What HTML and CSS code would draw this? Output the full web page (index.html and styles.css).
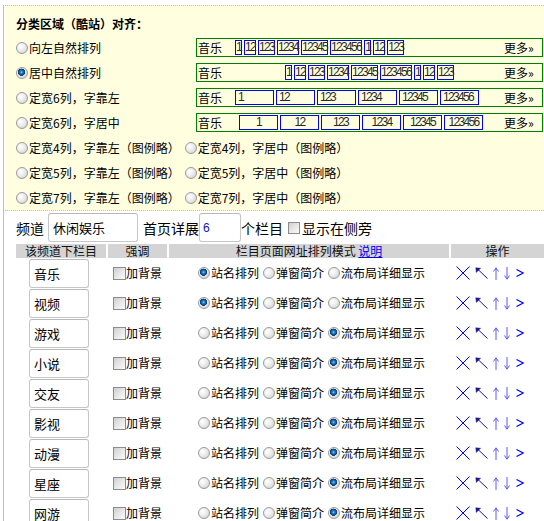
FILE: index.html
```html
<!DOCTYPE html>
<html>
<head>
<meta charset="utf-8">
<link rel="stylesheet" href="styles.css">
</head>
<body>
<div class="page">
  <div class="panel">
    <div class="title">分类区域（酷站）对齐：</div>

    <div class="opt-row">
      <label class="opt"><input class="rd" type="radio" name="align">向左自然排列</label>
      <div class="preview">
        <span class="pv-name">音乐</span>
        <span class="pv-items">
          <span class="tag">1</span><span class="tag">12</span><span class="tag">123</span><span class="tag">1234</span><span class="tag">12345</span><span class="tag">123456</span><span class="tag">1</span><span class="tag">12</span><span class="tag">123</span>
        </span>
        <span class="pv-more">更多»</span>
      </div>
    </div>

    <div class="opt-row">
      <label class="opt"><input class="rd" type="radio" name="align" checked>居中自然排列</label>
      <div class="preview">
        <span class="pv-name">音乐</span>
        <span class="pv-items pv-center">
          <span class="tag">1</span><span class="tag">12</span><span class="tag">123</span><span class="tag">1234</span><span class="tag">12345</span><span class="tag">123456</span><span class="tag">1</span><span class="tag">12</span><span class="tag">123</span>
        </span>
        <span class="pv-more">更多»</span>
      </div>
    </div>

    <div class="opt-row">
      <label class="opt"><input class="rd" type="radio" name="align">定宽6列，字靠左</label>
      <div class="preview">
        <span class="pv-name">音乐</span>
        <span class="pv-items">
          <span class="tag fixed">1</span><span class="tag fixed">12</span><span class="tag fixed">123</span><span class="tag fixed">1234</span><span class="tag fixed">12345</span><span class="tag fixed">123456</span>
        </span>
        <span class="pv-more">更多»</span>
      </div>
    </div>

    <div class="opt-row">
      <label class="opt"><input class="rd" type="radio" name="align">定宽6列，字居中</label>
      <div class="preview">
        <span class="pv-name">音乐</span>
        <span class="pv-items pv-shift">
          <span class="tag fixed mid">1</span><span class="tag fixed mid">12</span><span class="tag fixed mid">123</span><span class="tag fixed mid">1234</span><span class="tag fixed mid">12345</span><span class="tag fixed mid">123456</span>
        </span>
        <span class="pv-more">更多»</span>
      </div>
    </div>

    <div class="opt-row">
      <label class="opt-inline"><input class="rd" type="radio" name="align">定宽4列，字靠左（图例略）</label>
      <label class="opt-inline second"><input class="rd" type="radio" name="align">定宽4列，字居中（图例略）</label>
    </div>
    <div class="opt-row">
      <label class="opt-inline"><input class="rd" type="radio" name="align">定宽5列，字靠左（图例略）</label>
      <label class="opt-inline second"><input class="rd" type="radio" name="align">定宽5列，字居中（图例略）</label>
    </div>
    <div class="opt-row">
      <label class="opt-inline"><input class="rd" type="radio" name="align">定宽7列，字靠左（图例略）</label>
      <label class="opt-inline second"><input class="rd" type="radio" name="align">定宽7列，字居中（图例略）</label>
    </div>
  </div>

  <div class="channel">
    <span class="ch-label">频道</span>
    <input class="field ch-name" type="text" value="休闲娱乐">
    <span class="ch-label">首页详展</span>
    <input class="field ch-num" type="text" value="6">
    <span class="ch-label">个栏目</span>
    <label class="ch-side"><input class="cb" type="checkbox">显示在侧旁</label>
  </div>

  <div class="grid">
    <div class="th">该频道下栏目</div>
    <div class="th">强调</div>
    <div class="th">栏目页面网址排列模式 <a class="link" href="#">说明</a></div>
    <div class="th">操作</div>

    <div class="td c1"><input class="field col-name" type="text" value="音乐"></div>
    <div class="td c2"><label class="chk"><input class="cb" type="checkbox">加背景</label></div>
    <div class="td c3"><label class="ri"><input class="rd" type="radio" name="m1" checked>站名排列</label><label class="ri"><input class="rd" type="radio" name="m1">弹窗简介</label><label class="ri"><input class="rd" type="radio" name="m1">流布局详细显示</label></div>
    <div class="td c4"><svg class="ic ic-x" width="14" height="14" viewBox="0 0 14 14"><path d="M0.5 0.5L13.5 13.5M13.5 0.5L0.5 13.5"/></svg><svg class="ic ic-ul" width="13" height="12" viewBox="0 0 13 12"><path class="st" d="M12.5 11.5L2.5 2"/><path class="hd" d="M0.8 0.8L5.6 1.3L1.3 5.4Z"/></svg><svg class="ic ic-v" width="6" height="13" viewBox="0 0 6 13"><path d="M3 1V13M0.5 4.5L3 0.8L5.5 4.5"/></svg><svg class="ic ic-v" width="6" height="13" viewBox="0 0 6 13"><path d="M3 0V12M0.5 8.5L3 12.2L5.5 8.5"/></svg><svg class="ic ic-gt" width="8" height="8" viewBox="0 0 8 8"><path d="M0.5 0.5L7.2 4L0.5 7.5"/></svg></div>

    <div class="td c1"><input class="field col-name" type="text" value="视频"></div>
    <div class="td c2"><label class="chk"><input class="cb" type="checkbox">加背景</label></div>
    <div class="td c3"><label class="ri"><input class="rd" type="radio" name="m2" checked>站名排列</label><label class="ri"><input class="rd" type="radio" name="m2">弹窗简介</label><label class="ri"><input class="rd" type="radio" name="m2">流布局详细显示</label></div>
    <div class="td c4"><svg class="ic ic-x" width="14" height="14" viewBox="0 0 14 14"><path d="M0.5 0.5L13.5 13.5M13.5 0.5L0.5 13.5"/></svg><svg class="ic ic-ul" width="13" height="12" viewBox="0 0 13 12"><path class="st" d="M12.5 11.5L2.5 2"/><path class="hd" d="M0.8 0.8L5.6 1.3L1.3 5.4Z"/></svg><svg class="ic ic-v" width="6" height="13" viewBox="0 0 6 13"><path d="M3 1V13M0.5 4.5L3 0.8L5.5 4.5"/></svg><svg class="ic ic-v" width="6" height="13" viewBox="0 0 6 13"><path d="M3 0V12M0.5 8.5L3 12.2L5.5 8.5"/></svg><svg class="ic ic-gt" width="8" height="8" viewBox="0 0 8 8"><path d="M0.5 0.5L7.2 4L0.5 7.5"/></svg></div>

    <div class="td c1"><input class="field col-name" type="text" value="游戏"></div>
    <div class="td c2"><label class="chk"><input class="cb" type="checkbox">加背景</label></div>
    <div class="td c3"><label class="ri"><input class="rd" type="radio" name="m3">站名排列</label><label class="ri"><input class="rd" type="radio" name="m3">弹窗简介</label><label class="ri"><input class="rd" type="radio" name="m3" checked>流布局详细显示</label></div>
    <div class="td c4"><svg class="ic ic-x" width="14" height="14" viewBox="0 0 14 14"><path d="M0.5 0.5L13.5 13.5M13.5 0.5L0.5 13.5"/></svg><svg class="ic ic-ul" width="13" height="12" viewBox="0 0 13 12"><path class="st" d="M12.5 11.5L2.5 2"/><path class="hd" d="M0.8 0.8L5.6 1.3L1.3 5.4Z"/></svg><svg class="ic ic-v" width="6" height="13" viewBox="0 0 6 13"><path d="M3 1V13M0.5 4.5L3 0.8L5.5 4.5"/></svg><svg class="ic ic-v" width="6" height="13" viewBox="0 0 6 13"><path d="M3 0V12M0.5 8.5L3 12.2L5.5 8.5"/></svg><svg class="ic ic-gt" width="8" height="8" viewBox="0 0 8 8"><path d="M0.5 0.5L7.2 4L0.5 7.5"/></svg></div>

    <div class="td c1"><input class="field col-name" type="text" value="小说"></div>
    <div class="td c2"><label class="chk"><input class="cb" type="checkbox">加背景</label></div>
    <div class="td c3"><label class="ri"><input class="rd" type="radio" name="m4">站名排列</label><label class="ri"><input class="rd" type="radio" name="m4">弹窗简介</label><label class="ri"><input class="rd" type="radio" name="m4" checked>流布局详细显示</label></div>
    <div class="td c4"><svg class="ic ic-x" width="14" height="14" viewBox="0 0 14 14"><path d="M0.5 0.5L13.5 13.5M13.5 0.5L0.5 13.5"/></svg><svg class="ic ic-ul" width="13" height="12" viewBox="0 0 13 12"><path class="st" d="M12.5 11.5L2.5 2"/><path class="hd" d="M0.8 0.8L5.6 1.3L1.3 5.4Z"/></svg><svg class="ic ic-v" width="6" height="13" viewBox="0 0 6 13"><path d="M3 1V13M0.5 4.5L3 0.8L5.5 4.5"/></svg><svg class="ic ic-v" width="6" height="13" viewBox="0 0 6 13"><path d="M3 0V12M0.5 8.5L3 12.2L5.5 8.5"/></svg><svg class="ic ic-gt" width="8" height="8" viewBox="0 0 8 8"><path d="M0.5 0.5L7.2 4L0.5 7.5"/></svg></div>

    <div class="td c1"><input class="field col-name" type="text" value="交友"></div>
    <div class="td c2"><label class="chk"><input class="cb" type="checkbox">加背景</label></div>
    <div class="td c3"><label class="ri"><input class="rd" type="radio" name="m5">站名排列</label><label class="ri"><input class="rd" type="radio" name="m5">弹窗简介</label><label class="ri"><input class="rd" type="radio" name="m5" checked>流布局详细显示</label></div>
    <div class="td c4"><svg class="ic ic-x" width="14" height="14" viewBox="0 0 14 14"><path d="M0.5 0.5L13.5 13.5M13.5 0.5L0.5 13.5"/></svg><svg class="ic ic-ul" width="13" height="12" viewBox="0 0 13 12"><path class="st" d="M12.5 11.5L2.5 2"/><path class="hd" d="M0.8 0.8L5.6 1.3L1.3 5.4Z"/></svg><svg class="ic ic-v" width="6" height="13" viewBox="0 0 6 13"><path d="M3 1V13M0.5 4.5L3 0.8L5.5 4.5"/></svg><svg class="ic ic-v" width="6" height="13" viewBox="0 0 6 13"><path d="M3 0V12M0.5 8.5L3 12.2L5.5 8.5"/></svg><svg class="ic ic-gt" width="8" height="8" viewBox="0 0 8 8"><path d="M0.5 0.5L7.2 4L0.5 7.5"/></svg></div>

    <div class="td c1"><input class="field col-name" type="text" value="影视"></div>
    <div class="td c2"><label class="chk"><input class="cb" type="checkbox">加背景</label></div>
    <div class="td c3"><label class="ri"><input class="rd" type="radio" name="m6">站名排列</label><label class="ri"><input class="rd" type="radio" name="m6">弹窗简介</label><label class="ri"><input class="rd" type="radio" name="m6" checked>流布局详细显示</label></div>
    <div class="td c4"><svg class="ic ic-x" width="14" height="14" viewBox="0 0 14 14"><path d="M0.5 0.5L13.5 13.5M13.5 0.5L0.5 13.5"/></svg><svg class="ic ic-ul" width="13" height="12" viewBox="0 0 13 12"><path class="st" d="M12.5 11.5L2.5 2"/><path class="hd" d="M0.8 0.8L5.6 1.3L1.3 5.4Z"/></svg><svg class="ic ic-v" width="6" height="13" viewBox="0 0 6 13"><path d="M3 1V13M0.5 4.5L3 0.8L5.5 4.5"/></svg><svg class="ic ic-v" width="6" height="13" viewBox="0 0 6 13"><path d="M3 0V12M0.5 8.5L3 12.2L5.5 8.5"/></svg><svg class="ic ic-gt" width="8" height="8" viewBox="0 0 8 8"><path d="M0.5 0.5L7.2 4L0.5 7.5"/></svg></div>

    <div class="td c1"><input class="field col-name" type="text" value="动漫"></div>
    <div class="td c2"><label class="chk"><input class="cb" type="checkbox">加背景</label></div>
    <div class="td c3"><label class="ri"><input class="rd" type="radio" name="m7">站名排列</label><label class="ri"><input class="rd" type="radio" name="m7">弹窗简介</label><label class="ri"><input class="rd" type="radio" name="m7" checked>流布局详细显示</label></div>
    <div class="td c4"><svg class="ic ic-x" width="14" height="14" viewBox="0 0 14 14"><path d="M0.5 0.5L13.5 13.5M13.5 0.5L0.5 13.5"/></svg><svg class="ic ic-ul" width="13" height="12" viewBox="0 0 13 12"><path class="st" d="M12.5 11.5L2.5 2"/><path class="hd" d="M0.8 0.8L5.6 1.3L1.3 5.4Z"/></svg><svg class="ic ic-v" width="6" height="13" viewBox="0 0 6 13"><path d="M3 1V13M0.5 4.5L3 0.8L5.5 4.5"/></svg><svg class="ic ic-v" width="6" height="13" viewBox="0 0 6 13"><path d="M3 0V12M0.5 8.5L3 12.2L5.5 8.5"/></svg><svg class="ic ic-gt" width="8" height="8" viewBox="0 0 8 8"><path d="M0.5 0.5L7.2 4L0.5 7.5"/></svg></div>

    <div class="td c1"><input class="field col-name" type="text" value="星座"></div>
    <div class="td c2"><label class="chk"><input class="cb" type="checkbox">加背景</label></div>
    <div class="td c3"><label class="ri"><input class="rd" type="radio" name="m8">站名排列</label><label class="ri"><input class="rd" type="radio" name="m8">弹窗简介</label><label class="ri"><input class="rd" type="radio" name="m8" checked>流布局详细显示</label></div>
    <div class="td c4"><svg class="ic ic-x" width="14" height="14" viewBox="0 0 14 14"><path d="M0.5 0.5L13.5 13.5M13.5 0.5L0.5 13.5"/></svg><svg class="ic ic-ul" width="13" height="12" viewBox="0 0 13 12"><path class="st" d="M12.5 11.5L2.5 2"/><path class="hd" d="M0.8 0.8L5.6 1.3L1.3 5.4Z"/></svg><svg class="ic ic-v" width="6" height="13" viewBox="0 0 6 13"><path d="M3 1V13M0.5 4.5L3 0.8L5.5 4.5"/></svg><svg class="ic ic-v" width="6" height="13" viewBox="0 0 6 13"><path d="M3 0V12M0.5 8.5L3 12.2L5.5 8.5"/></svg><svg class="ic ic-gt" width="8" height="8" viewBox="0 0 8 8"><path d="M0.5 0.5L7.2 4L0.5 7.5"/></svg></div>

    <div class="td c1"><input class="field col-name" type="text" value="网游"></div>
    <div class="td c2"><label class="chk"><input class="cb" type="checkbox">加背景</label></div>
    <div class="td c3"><label class="ri"><input class="rd" type="radio" name="m9">站名排列</label><label class="ri"><input class="rd" type="radio" name="m9">弹窗简介</label><label class="ri"><input class="rd" type="radio" name="m9" checked>流布局详细显示</label></div>
    <div class="td c4"><svg class="ic ic-x" width="14" height="14" viewBox="0 0 14 14"><path d="M0.5 0.5L13.5 13.5M13.5 0.5L0.5 13.5"/></svg><svg class="ic ic-ul" width="13" height="12" viewBox="0 0 13 12"><path class="st" d="M12.5 11.5L2.5 2"/><path class="hd" d="M0.8 0.8L5.6 1.3L1.3 5.4Z"/></svg><svg class="ic ic-v" width="6" height="13" viewBox="0 0 6 13"><path d="M3 1V13M0.5 4.5L3 0.8L5.5 4.5"/></svg><svg class="ic ic-v" width="6" height="13" viewBox="0 0 6 13"><path d="M3 0V12M0.5 8.5L3 12.2L5.5 8.5"/></svg><svg class="ic ic-gt" width="8" height="8" viewBox="0 0 8 8"><path d="M0.5 0.5L7.2 4L0.5 7.5"/></svg></div>
  </div>
</div>
</body>
</html>
```
FILE: styles.css
```css
html, body {
  margin: 0;
  padding: 0;
  overflow: hidden;
  background: #fff;
}
body {
  font-family: "Noto Sans CJK SC", "Noto Sans", sans-serif;
  font-size: 12px;
  color: #000;
}
.page {
  margin-left: 3px;
  border-left: 1px solid #99e064;
  padding-left: 1px;
  height: 521px;
  box-sizing: border-box;
}
.panel {
  margin-top: 5px;
  background: #ffffe0;
  border-top: 1px dotted #bdbdbd;
  border-bottom: 1px dotted #bdbdbd;
  padding: 6px 1px 0 11px;
}
.title {
  font-weight: bold;
  font-size: 12px;
  line-height: 23px;
  height: 23px;
}
.opt-row {
  display: flex;
  align-items: center;
  height: 25px;
}
.opt {
  width: 180px;
  flex: none;
  display: flex;
  align-items: center;
  line-height: 14px;
}
.opt-inline {
  display: flex;
  align-items: center;
  line-height: 14px;
}
.opt-inline.second {
  margin-left: 5px;
}
.rd {
  appearance: none;
  -webkit-appearance: none;
  width: 12px;
  height: 12px;
  margin: 0 1px 0 0;
  border-radius: 50%;
  border: 1px solid #9a9a9a;
  box-sizing: border-box;
  flex: none;
  background: radial-gradient(circle at 35% 35%, #ffffff 0, #ececec 45%, #c9c9c9 100%);
}
.rd:checked {
  background:
    radial-gradient(circle at 45% 42%, #8fd0ff 0, #2b86cc 1.2px, #0b4a8a 2.8px, #0b3f78 3.4px, rgba(0,0,0,0) 3.9px),
    radial-gradient(circle at 35% 35%, #ffffff 0, #ececec 45%, #c9c9c9 100%);
}
.cb {
  appearance: none;
  -webkit-appearance: none;
  width: 13px;
  height: 13px;
  margin: 0;
  border: 1px solid #8c8c8c;
  box-sizing: border-box;
  flex: none;
  background: linear-gradient(135deg, #cfcfcf 0, #e9e9e9 55%, #fafafa 100%);
}
.preview {
  flex: 1;
  height: 19px;
  box-sizing: border-box;
  border: 1px solid #008000;
  display: flex;
  align-items: center;
}
.pv-name {
  width: 38px;
  flex: none;
  box-sizing: border-box;
  padding-left: 1px;
  line-height: 14px;
}
.pv-items {
  flex: 1;
  display: flex;
  align-items: center;
  gap: 2px;
}
.pv-center {
  justify-content: center;
}
.pv-shift {
  padding-left: 4px;
}
.pv-more {
  width: 30px;
  margin-right: 8px;
  flex: none;
  line-height: 14px;
  white-space: nowrap;
}
.tag {
  display: block;
  box-sizing: border-box;
  height: 15px;
  border: 1px solid #0000ff;
  font-family: "Liberation Sans", sans-serif;
  font-size: 12px;
  line-height: 13px;
  letter-spacing: -1.67px;
  color: #2a2a2a;
  white-space: nowrap;
}
.tag.fixed {
  width: 39px;
  padding-left: 2px;
}
.tag.mid {
  padding-left: 0;
  text-align: center;
}

.channel {
  display: flex;
  align-items: center;
  padding: 2px 0 0 11px;
  height: 29px;
}
.ch-label {
  font-size: 14px;
  line-height: 16px;
}
.field {
  box-sizing: border-box;
  height: 29px;
  border: 1px solid #c6c6c6;
  border-top-color: #b8b8b8;
  border-radius: 3px;
  background: #fff;
  padding: 0 0 0 4px;
  margin: 0;
  font-family: "Noto Sans CJK SC", sans-serif;
  color: #000;
  outline: none;
}
.ch-name {
  width: 90px;
  margin: 0 5px 0 4px;
  font-size: 13px;
}
.ch-num {
  width: 42px;
  font-size: 12px;
  padding-left: 3px;
  color: #1010c0;
  font-family: "Liberation Sans", sans-serif;
}
.ch-side {
  display: flex;
  align-items: center;
  font-size: 14px;
  line-height: 16px;
  margin-left: 5px;
}
.ch-side .cb {
  width: 12px;
  height: 12px;
  margin-right: 2px;
}

.grid {
  display: grid;
  grid-template-columns: 90px 59px 280px 93px;
  grid-template-rows: 14px;
  grid-auto-rows: 30px;
  column-gap: 2px;
  margin: 2px 0 0 11px;
}
.th {
  background: #d4d4d4;
  height: 14px;
  line-height: 14px;
  text-align: center;
  font-size: 12px;
  white-space: nowrap;
  color: #111;
}
.link {
  color: #0000ee;
  text-decoration: underline;
}
.td {
  display: flex;
  align-items: center;
  height: 30px;
  white-space: nowrap;
}
.c1 {
  align-items: flex-start;
}
.col-name {
  width: 60px;
  margin: 1px 0 0 13px;
  font-size: 13px;
}
.c2 {
  padding-left: 5px;
}
.chk {
  display: flex;
  align-items: center;
  line-height: 14px;
}
.c3 {
  padding-left: 29px;
  gap: 4px;
}
.ri {
  display: flex;
  align-items: center;
  line-height: 14px;
}
.c4 {
  padding-left: 5px;
}
.ic {
  display: block;
  flex: none;
  fill: none;
}
.ic-x {
  stroke: #0000ff;
  stroke-width: 1;
}
.ic-ul {
  margin-left: 5px;
}
.ic-ul .st {
  stroke: #1a1a90;
  stroke-width: 1;
}
.ic-ul .hd {
  fill: #1a1a90;
  stroke: #1a1a90;
  stroke-width: 0.5;
}
.ic-v {
  margin-left: 5px;
  stroke: #5a5aff;
  stroke-width: 1;
}
.ic-gt {
  margin-left: 6px;
  stroke: #0000ff;
  stroke-width: 1.2;
}
```
